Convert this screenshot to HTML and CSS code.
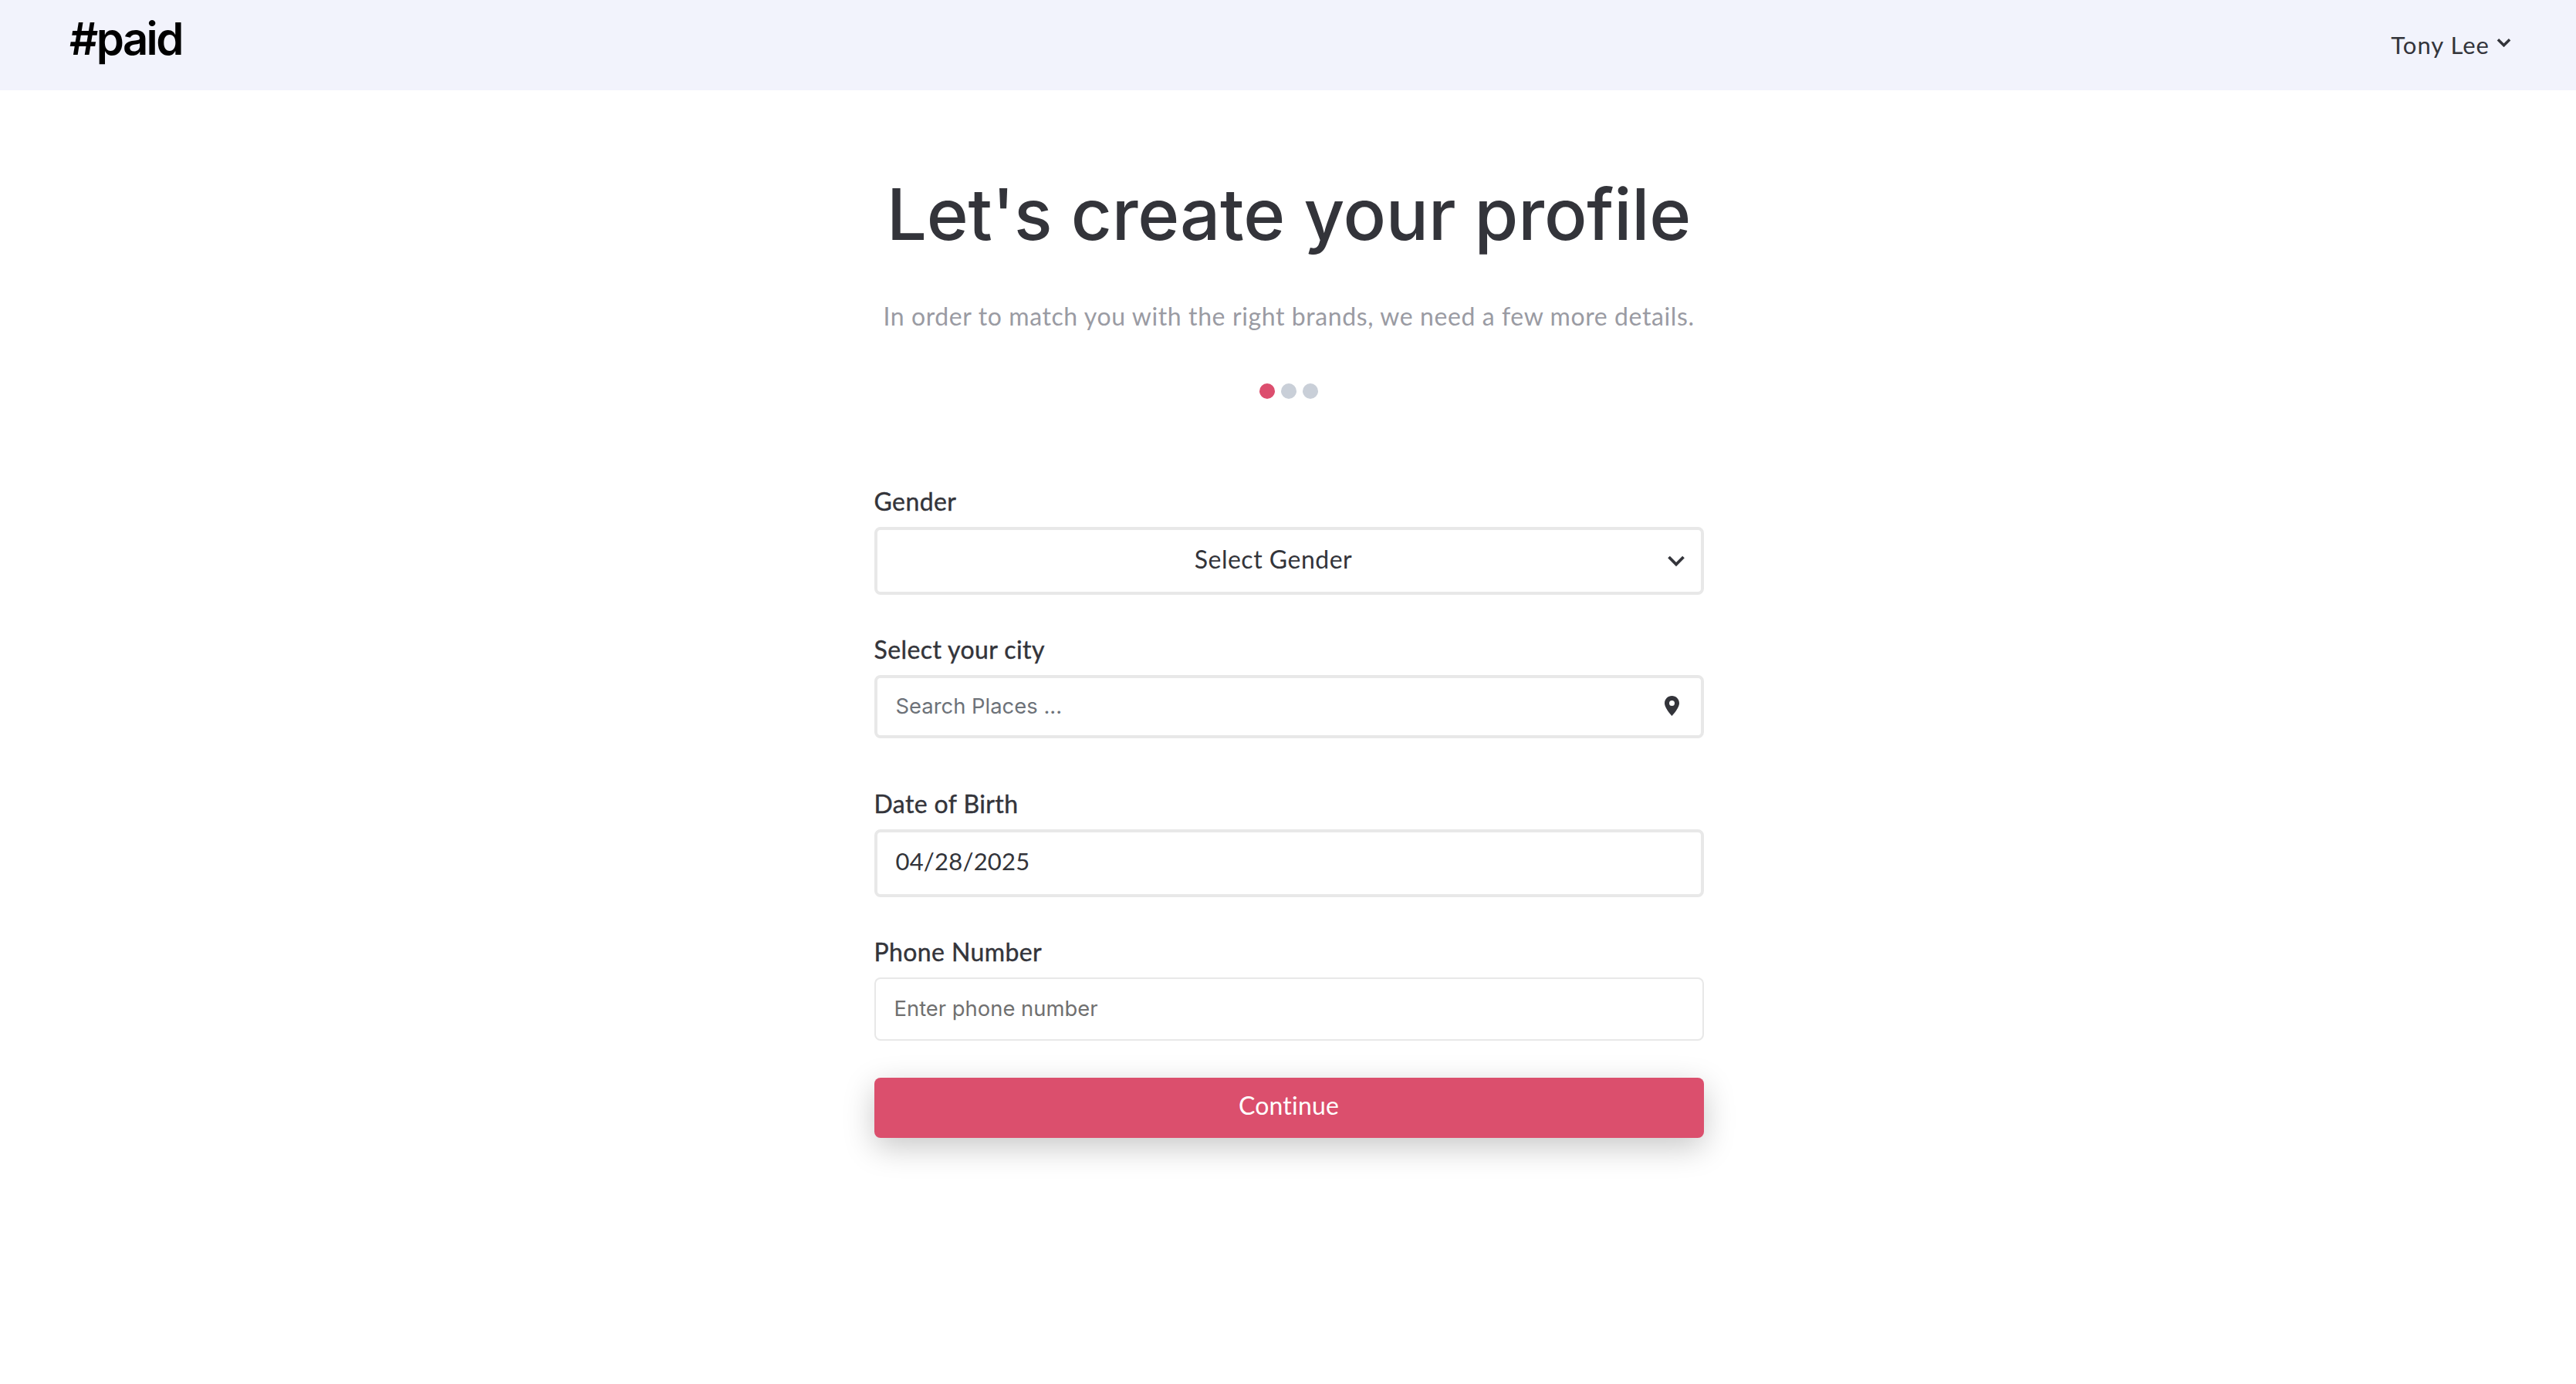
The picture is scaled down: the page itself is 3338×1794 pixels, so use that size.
FILE: index.html
```html
<!DOCTYPE html>
<html lang="en">
<head>
<meta charset="utf-8">
<title>Let's create your profile</title>
<link rel="stylesheet" href="styles.css">
</head>
<body>
<header class="topbar">
  <a class="logo">#paid</a>
  <div class="user">
    <span>Tony Lee</span>
    <svg class="user-chevron" viewBox="0 0 20 12"><path d="M2 2 10 10 18 2" fill="none" stroke="#33343a" stroke-width="3.6"/></svg>
  </div>
</header>
<main class="page">
  <h1 class="title">Let's create your profile</h1>
  <p class="subtitle">In order to match you with the right brands, we need a few more details.</p>
  <div class="dots"><i class="dot active"></i><i class="dot"></i><i class="dot"></i></div>
  <form class="form">
    <div class="field field-gender">
      <label class="label">Gender</label>
      <div class="control tall">
        <select class="select"><option>Select Gender</option></select>
        <svg class="chevron" viewBox="0 0 22 15"><path d="M1.500 2 11 11.500 20.500 2" fill="none" stroke="#33343a" stroke-width="3.800"/></svg>
      </div>
    </div>
    <div class="field field-city">
      <label class="label">Select your city</label>
      <div class="control short">
        <input class="input places" type="text" placeholder="Search Places ...">
        <svg class="pin" viewBox="0 0 19 26"><path fill="#33343a" fill-rule="evenodd" d="M9.500 0C4.200 0 0 4.200 0 9.500 0 16 9.500 26 9.500 26S19 16 19 9.500C19 4.200 14.800 0 9.500 0Zm0 13a3.500 3.500 0 1 1 0-7 3.500 3.500 0 0 1 0 7Z"/></svg>
      </div>
    </div>
    <div class="field field-date">
      <label class="label">Date of Birth</label>
      <div class="control tall">
        <input class="input date" type="text" value="04/28/2025">
      </div>
    </div>
    <div class="field field-phone">
      <label class="label">Phone Number</label>
      <div class="control short thin">
        <input class="input phone" type="text" placeholder="Enter phone number">
      </div>
    </div>
    <button class="submit" type="button">Continue</button>
  </form>
</main>
</body>
</html>
```
FILE: styles.css
```css
* { box-sizing: border-box; }
html, body { margin: 0; padding: 0; background: #fff; }
body { font-family: "Lato", "Liberation Sans", sans-serif; color: #33343a; min-height: 1794px; }

.topbar {
  height: 117px;
  background: #f2f3fc;
  display: flex;
  justify-content: space-between;
  padding: 0 84px 0 90px;
}
.logo {
  font-family: "Inter", sans-serif;
  font-weight: 600;
  font-size: 58px;
  letter-spacing: -2.6px;
  line-height: 70px;
  height: 70px;
  margin-top: 15px;
  color: #000;
}
.user {
  display: flex;
  align-items: flex-start;
  gap: 9px;
  font-size: 31px;
  letter-spacing: 1px;
  line-height: 38px;
  margin-top: 39px;
  color: #33343a;
}
.user-chevron { width: 19px; height: 12px; margin-top: 10px; }

.page { width: 1077px; padding-left: 2px; margin: 0 auto; display: flex; flex-direction: column; align-items: center; }
.title {
  font-family: "Inter", sans-serif;
  font-weight: 500;
  font-size: 92px;
  letter-spacing: -0.2px;
  line-height: 112px;
  margin: 105px 0 0;
  white-space: nowrap;
  color: #33343a;
}
.subtitle { font-size: 32px; letter-spacing: .6px; line-height: 40px; margin: 56px 0 0; color: #9a9ba3; white-space: nowrap; }
.dots { display: flex; gap: 8px; margin-top: 67px; }
.dot { width: 20px; height: 20px; border-radius: 50%; background: #c9cfd8; }
.dot.active { background: #dc4e6e; }

.form { width: 100%; margin-top: 114px; display: flex; flex-direction: column; }
.field { display: flex; flex-direction: column; }
.field-city { margin-top: 52px; }
.field-date { margin-top: 66px; }
.field-phone { margin-top: 52px; }
.label { font-size: 32px; letter-spacing: .4px; line-height: 38px; color: #33343a; margin-bottom: 14px; -webkit-text-stroke: .4px #33343a; }
.control { position: relative; border: 4px solid #e8e8e8; border-radius: 8px; background: #fff; display: flex; }
.control.tall { height: 88px; }
.control.short { height: 82px; }
.control.thin { border-width: 2px; }
.select, .input { border: 0; outline: 0; background: transparent; width: 100%; font-family: inherit; color: #33343a; }
.select {
  appearance: none;
  font-size: 32px;
  letter-spacing: .5px;
  text-align: center;
  text-align-last: center;
  padding: 0 40px 6px 0;
}
.input { font-size: 30px; padding: 0 24px; }
.places { font-family: "Inter", sans-serif; font-size: 27.4px; padding-bottom: 3px; }
.places::placeholder { color: #6d7279; opacity: 1; }
.date { font-size: 31px; letter-spacing: .2px; padding-bottom: 6px; }
.phone { font-family: "Inter", sans-serif; font-size: 27.4px; padding-bottom: 2px; }
.phone::placeholder { color: #707070; opacity: 1; }
.chevron { position: absolute; right: 21px; top: 33px; width: 22px; height: 15px; pointer-events: none; }
.pin { position: absolute; right: 28px; top: 23px; width: 19px; height: 26px; pointer-events: none; }
.submit {
  margin-top: 48px;
  height: 78px;
  border: 0;
  border-radius: 8px;
  background: #db4f6d;
  color: #fff;
  font-family: inherit;
  font-size: 32px;
  letter-spacing: .2px;
  padding: 0 0 8px;
  box-shadow: 0 12px 40px rgba(0,0,0,.22);
}
```
